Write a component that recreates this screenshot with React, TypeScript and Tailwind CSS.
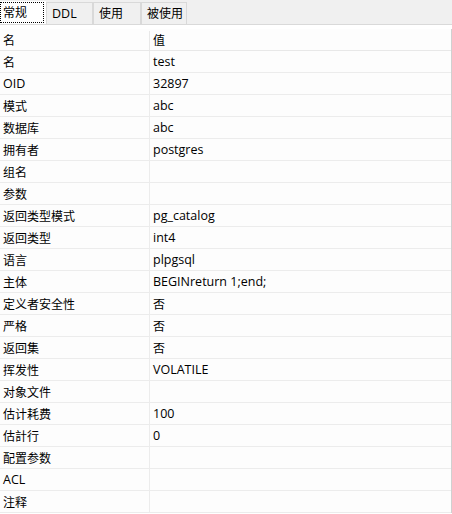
const tabs = ['常规', 'DDL', '使用', '被使用'];

const rows: [string, string][] = [
  ['名', 'test'],
  ['OID', '32897'],
  ['模式', 'abc'],
  ['数据库', 'abc'],
  ['拥有者', 'postgres'],
  ['组名', ''],
  ['参数', ''],
  ['返回类型模式', 'pg_catalog'],
  ['返回类型', 'int4'],
  ['语言', 'plpgsql'],
  ['主体', 'BEGINreturn 1;end;'],
  ['定义者安全性', '否'],
  ['严格', '否'],
  ['返回集', '否'],
  ['挥发性', 'VOLATILE'],
  ['对象文件', ''],
  ['估计耗费', '100'],
  ['估計行', '0'],
  ['配置参数', ''],
  ['ACL', ''],
  ['注释', ''],
];

// latin text sits a touch larger than the CJK glyphs in the original UI font
function Cell({ text }: { text: string }) {
  const latin = /^[\x00-\x7f]+$/.test(text);
  return <span className={latin ? 'text-[12.5px]' : 'text-[12px]'}>{text}</span>;
}

export default function App() {
  return (
    <div
      className="w-[452px] h-[514px] overflow-hidden bg-white text-[12px] text-black"
      style={{ fontFamily: '"Open Sans", "Noto Sans CJK SC", sans-serif' }}
    >
      {/* tab strip */}
      <div className="flex h-[25px] items-end border-b border-[#d9d9d9] bg-[#f0f0f0]">
        {tabs.map((t, i) =>
          i === 0 ? (
            <div key={t} className="flex h-[23px] w-[46px] items-center bg-white">
              <div className="flex h-[21px] w-[44px] items-center whitespace-nowrap border border-dotted border-black pl-[2px] pt-[1px] leading-none">
                {t}
              </div>
            </div>
          ) : (
            <div
              key={t}
              className="flex h-[22px] shrink-0 items-center whitespace-nowrap border-l border-r border-t border-[#d9d9d9] bg-[#f0f0f0] pl-[5px] pt-[1px] leading-none"
              style={{ width: i === 3 ? 46 : i === 1 ? 47 : 48 }}
            >
              <Cell text={t} />
            </div>
          )
        )}
      </div>

      {/* property grid */}
      <div className="mt-[4px] border-r border-[#d0d0d0] bg-[#fdfdfd]">
        <div className="flex h-[22px] items-center border-b border-[#e8e8e8] pt-[2px]">
          <div className="flex h-full w-[150px] items-center border-r border-[#e8e8e8] pl-[3px]">名</div>
          <div className="pl-[3px]">值</div>
        </div>
        {rows.map(([k, v]) => (
          <div key={k} className="flex h-[22px] items-center border-b border-[#ececec]">
            <div className="flex h-full w-[150px] items-center border-r border-[#ececec] pl-[3px] pt-[2px]">
              <Cell text={k} />
            </div>
            <div className="pl-[3px] pt-[2px]">
              <Cell text={v} />
            </div>
          </div>
        ))}
      </div>
    </div>
  );
}
